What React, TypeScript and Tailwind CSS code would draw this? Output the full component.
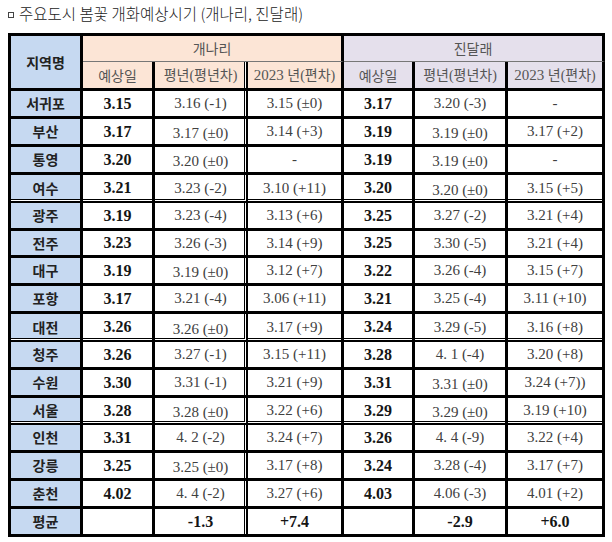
import React from "react";

const rows: string[][] = [
  ["서귀포", "3.15", "3.16 (-1)", "3.15 (±0)", "3.17", "3.20 (-3)", "-"],
  ["부산", "3.17", "3.17 (±0)", "3.14 (+3)", "3.19", "3.19 (±0)", "3.17 (+2)"],
  ["통영", "3.20", "3.20 (±0)", "-", "3.19", "3.19 (±0)", "-"],
  ["여수", "3.21", "3.23 (-2)", "3.10 (+11)", "3.20", "3.20 (±0)", "3.15 (+5)"],
  ["광주", "3.19", "3.23 (-4)", "3.13 (+6)", "3.25", "3.27 (-2)", "3.21 (+4)"],
  ["전주", "3.23", "3.26 (-3)", "3.14 (+9)", "3.25", "3.30 (-5)", "3.21 (+4)"],
  ["대구", "3.19", "3.19 (±0)", "3.12 (+7)", "3.22", "3.26 (-4)", "3.15 (+7)"],
  ["포항", "3.17", "3.21 (-4)", "3.06 (+11)", "3.21", "3.25 (-4)", "3.11 (+10)"],
  ["대전", "3.26", "3.26 (±0)", "3.17 (+9)", "3.24", "3.29 (-5)", "3.16 (+8)"],
  ["청주", "3.26", "3.27 (-1)", "3.15 (+11)", "3.28", "4. 1 (-4)", "3.20 (+8)"],
  ["수원", "3.30", "3.31 (-1)", "3.21 (+9)", "3.31", "3.31 (±0)", "3.24 (+7))"],
  ["서울", "3.28", "3.28 (±0)", "3.22 (+6)", "3.29", "3.29 (±0)", "3.19 (+10)"],
  ["인천", "3.31", "4. 2 (-2)", "3.24 (+7)", "3.26", "4. 4 (-9)", "3.22 (+4)"],
  ["강릉", "3.25", "3.25 (±0)", "3.17 (+8)", "3.24", "3.28 (-4)", "3.17 (+7)"],
  ["춘천", "4.02", "4. 4 (-2)", "3.27 (+6)", "4.03", "4.06 (-3)", "4.01 (+2)"],
  ["평균", "", "-1.3", "+7.4", "", "-2.9", "+6.0"],
];

const doubleAfter = [3, 8, 11];

const SH_R = "shadow-[inset_-1px_0_0_#fff,inset_-2px_0_0_#000]";
const SH_B = "shadow-[inset_0_-1px_0_#fff,inset_0_-2px_0_#000]";
const SH_RB =
  "shadow-[inset_-1px_0_0_#fff,inset_0_-1px_0_#fff,inset_-2px_0_0_#000,inset_0_-2px_0_#000]";

const serif = "font-['Liberation_Serif','Noto_Sans_CJK_KR',serif]";
const sans = "font-['Noto_Sans_CJK_KR','Noto_Sans',sans-serif]";

function cellClass(r: number, c: number): string {
  const dr = c === 2;
  const db = doubleAfter.includes(r);
  const parts = ["flex items-center justify-center border-black"];
  parts.push(dr ? "border-r-2" : "border-r-[3px]");
  parts.push(db ? "border-b-2" : "border-b-[3px]");
  if (dr && db) parts.push(SH_RB);
  else if (dr) parts.push(SH_R);
  else if (db) parts.push(SH_B);
  return parts.join(" ");
}

export default function App() {
  return (
    <div className="w-[612px] h-[542px] bg-white">
      <div className={`h-[28px] flex items-center pl-2 text-[15.5px] font-light text-[#222] ${sans}`}>
        <span className="inline-block w-[6px] h-[6px] border border-[#444] mr-[5px] mt-[2px]" />
        <span>주요도시 봄꽃 개화예상시기 (개나리, 진달래)</span>
      </div>
      <div className="ml-2 mt-[5px] w-[597px] border-l-[3px] border-t-[3px] border-black grid grid-cols-[72px_72px_93px_96px_71px_93px_97px] grid-rows-[26px_29px_28px_28px_28px_28px_28px_27px_28px_28px_28px_28px_28px_27px_28px_28px_28px_28px]">
        <div
          className={`row-span-2 bg-[#c6d9f1] border-r-[3px] border-b-[3px] border-black flex items-center justify-center text-[14px] font-bold text-[#222] ${sans}`}
        >
          지역명
        </div>
        <div
          className={`col-span-3 bg-[#fce5d6] border-r-[3px] border-b border-b-[#777] border-r-black flex items-center justify-center text-[14px] text-[#555] ${sans}`}
        >
          개나리
        </div>
        <div
          className={`col-span-3 bg-[#e5e0ec] border-r-[3px] border-b border-b-[#777] border-r-black flex items-center justify-center text-[14px] text-[#555] ${sans}`}
        >
          진달래
        </div>
        <div className={`bg-[#fce5d6] border-r-[3px] border-b-[3px] border-black flex items-center justify-center text-[14px] text-[#555] ${sans}`}>
          예상일
        </div>
        <div className={`bg-[#fce5d6] border-r-2 border-b-[3px] border-black ${SH_R} flex items-center justify-center text-[14px] text-[#555] ${serif}`}>
          평년(평년차)
        </div>
        <div className={`bg-[#fce5d6] border-r-[3px] border-b-[3px] border-black flex items-center justify-center text-[14px] text-[#555] ${serif}`}>
          <span className="text-[15px]">2023</span>&nbsp;년(편차)
        </div>
        <div className={`bg-[#e5e0ec] border-r-[3px] border-b-[3px] border-black flex items-center justify-center text-[14px] text-[#555] ${sans}`}>
          예상일
        </div>
        <div className={`bg-[#e5e0ec] border-r-[3px] border-b-[3px] border-black flex items-center justify-center text-[14px] text-[#555] ${serif}`}>
          평년(평년차)
        </div>
        <div className={`bg-[#e5e0ec] border-r-[3px] border-b-[3px] border-black flex items-center justify-center text-[14px] text-[#555] ${serif}`}>
          <span className="text-[15px]">2023</span>&nbsp;년(편차)
        </div>

        {rows.map((row, r) =>
          row.map((v, c) => {
            const base = cellClass(r, c);
            if (c === 0) {
              return (
                <div key={`${r}-${c}`} className={`${base} bg-[#c6d9f1] text-[14px] font-bold text-[#222] ${sans}`}>
                  {v}
                </div>
              );
            }
            const isAvg = r === rows.length - 1;
            const bold = c === 1 || c === 4 || isAvg;
            const shift = (c === 2 || c === 5) && v.includes("±") ? "pt-[4px]" : "";
            return (
              <div
                key={`${r}-${c}`}
                className={`${base} bg-white ${serif} ${
                  bold ? "text-[16px] font-bold text-[#151515]" : "text-[15px] text-[#404040]"
                } ${shift}`}
              >
                {v}
              </div>
            );
          })
        )}
      </div>
    </div>
  );
}
